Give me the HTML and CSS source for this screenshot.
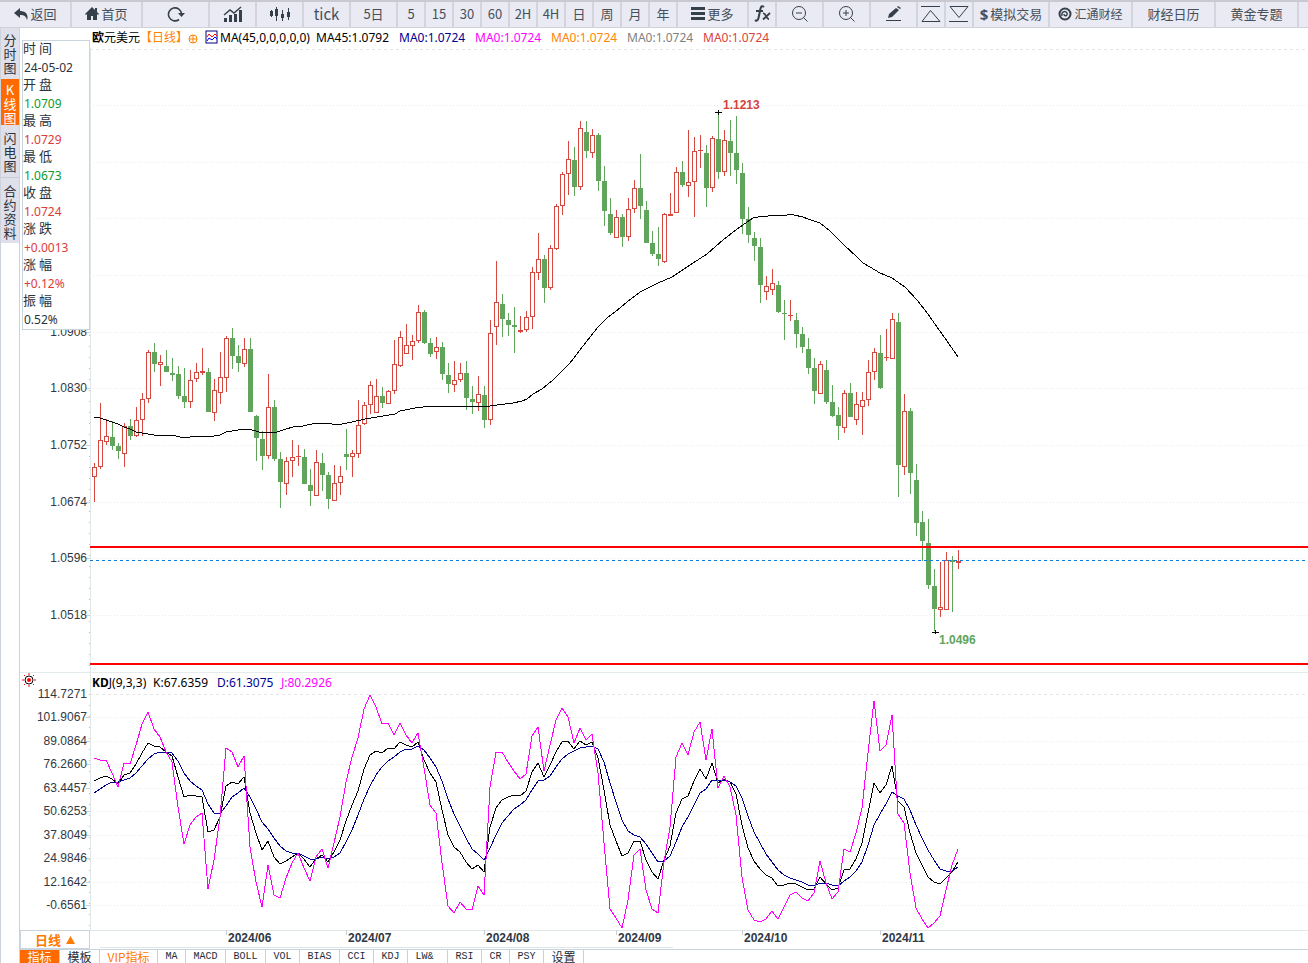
FILE: index.html
```html
<!DOCTYPE html>
<html lang="zh-CN">
<head>
<meta charset="utf-8">
<title>欧元美元 日线</title>
<link rel="stylesheet" href="styles.css">
</head>
<body>
<header class="toolbar">
  <button class="tool wide"><svg class="icon" width="14" height="12" viewBox="0 0 14 12"><path d="M6 0 0 5l6 5V7c4 0 6 1 7 5 2-6-2-9-7-9z"/></svg>返回</button>
  <button class="tool wide"><svg class="icon" width="14" height="13" viewBox="0 0 14 13"><path d="M7 0 0 7l1 1 1-1v6h4V9h2v4h4V7l1 1 1-1-2-2V1h-2v2z"/></svg>首页</button>
  <button class="tool reload" aria-label="刷新"><svg class="icon line" width="18" height="16" viewBox="0 0 18 16"><path d="M12 13.5A6.5 6.5 0 1 1 14.5 8" stroke-width="1.6"/><path class="solid" d="M11 7h7l-3.5 4z"/></svg></button>
  <button class="tool mid" aria-label="指标图"><svg class="icon line" width="20" height="16" viewBox="0 0 20 16"><path class="solid" d="M1 12h3v4H1zM6 9h3v7H6zM11 8h3v8h-3zM16 4h3v12h-3z"/><path d="M1 9l6-5 4 3 7-6" stroke-width="1.4"/></svg></button>
  <button class="tool mid" aria-label="K线图"><svg class="icon line" width="22" height="16" viewBox="0 0 22 16"><path d="M2.500 4v7M7.500 1v14M13.500 4v11M19.500 2v12"/><path class="solid" d="M1 5h3v5H1zM6 3h3v7H6zM12 8h3v4h-3zM18 6h3v5h-3z"/></svg></button>
  <button class="tool mid tick">tick</button>
  <button class="tool mid">5日</button>
  <button class="tool">5</button>
  <button class="tool">15</button>
  <button class="tool">30</button>
  <button class="tool">60</button>
  <button class="tool">2H</button>
  <button class="tool">4H</button>
  <button class="tool">日</button>
  <button class="tool">周</button>
  <button class="tool">月</button>
  <button class="tool">年</button>
  <button class="tool wide"><svg class="icon" width="14" height="13" viewBox="0 0 14 13"><path d="M0 0h14v3H0zM0 5h14v3H0zM0 10h14v3H0z"/></svg>更多</button>
  <button class="tool" aria-label="函数"><svg class="icon line" width="17" height="17" viewBox="0 0 17 17"><path d="M10 2C7 0 6.500 3 6 6L4.500 13C4 16 2 16 1 15M2 6h7" stroke-width="2"/><path d="M9 8.500c3-1 3 6 6 5.500M16 8l-7 6.500" stroke-width="1.800"/></svg></button>
  <button class="tool mid" aria-label="缩小"><svg class="icon line" width="16" height="16" viewBox="0 0 16 16"><circle cx="7" cy="7" r="6.500"/><path d="M4 7h6M11.500 11.500l4 4"/></svg></button>
  <button class="tool mid" aria-label="放大"><svg class="icon line" width="16" height="16" viewBox="0 0 16 16"><circle cx="7" cy="7" r="6.500"/><path d="M4 7h6M7 4v6M11.500 11.500l4 4"/></svg></button>
  <button class="tool mid" aria-label="画线"><svg class="icon" width="16" height="15" viewBox="0 0 16 15"><path d="M2 12l1-4 7-6 3 2-7 7zM11 1l1-1 3 2-1 1zM0 14h15v1H0z"/></svg></button>
  <button class="tool" aria-label="上移"><svg class="icon line" width="20" height="18" viewBox="0 0 20 18"><path d="M0 1.500h19M1 16.500 9.500 5.500 19 16.500z"/></svg></button>
  <button class="tool" aria-label="下移"><svg class="icon line" width="20" height="18" viewBox="0 0 20 18"><path d="M1 1.500h18L10 12.500zM0 16.500h19"/></svg></button>
  <button class="tool trade"><b class="dollar">$</b>模拟交易</button>
  <button class="tool link small"><svg class="icon line" width="14" height="14" viewBox="0 0 14 14"><circle cx="7" cy="7" r="5.500" stroke-width="2"/><path d="M4 9C3 5 7 3 9 6c1 3-3 4-3 1" stroke-width="1.400"/></svg>汇通财经</button>
  <button class="tool link">财经日历</button>
  <button class="tool link">黄金专题</button>
  <span class="filler"></span>
</header>

<div class="workspace">
  <nav class="side">
    <button class="side-tab">分时图</button>
    <button class="side-tab active">K线图</button>
    <button class="side-tab">闪电图</button>
    <button class="side-tab ruled">合约资料</button>
  </nav>

  <main class="main">
    <section class="pane">
      <div class="legend">
        <span><b>欧</b>元美元</span><span class="orange">【日线】</span>
        <svg class="mark" width="10" height="10" viewBox="0 0 10 10"><circle cx="5" cy="5" r="4"/><path d="M1 5h8M5 1v8"/></svg>
        <svg class="thumb" width="13" height="14" viewBox="0 0 13 14"><rect x="1" y="1" width="11" height="12"/><path class="red" d="M2 7l2-3 3 3 3-3 2 2"/><path class="blue" d="M2 11l2-3 3 2 3-3 2 2"/></svg>
        <span class="formula">MA(45,0,0,0,0,0)</span>
        <span class="first">MA45:1.0792</span>
        <span class="value navy">MA0:1.0724</span>
        <span class="value magenta">MA0:1.0724</span>
        <span class="value orange">MA0:1.0724</span>
        <span class="value gray">MA0:1.0724</span>
        <span class="value red">MA0:1.0724</span>
      </div>
      <svg class="plot price" id="price" role="img" aria-label="欧元美元日线"></svg>
      <dl class="quote">
        <dt>时 间</dt><dd>24-05-02</dd>
        <dt>开 盘</dt><dd class="down">1.0709</dd>
        <dt>最 高</dt><dd class="up">1.0729</dd>
        <dt>最 低</dt><dd class="down">1.0673</dd>
        <dt>收 盘</dt><dd class="up">1.0724</dd>
        <dt>涨 跌</dt><dd class="up">+0.0013</dd>
        <dt>涨 幅</dt><dd class="up">+0.12%</dd>
        <dt>振 幅</dt><dd>0.52%</dd>
      </dl>
    </section>

    <section class="pane ruled">
      <div class="legend kdj">
        <svg class="sun" width="14" height="14" viewBox="0 0 14 14"><path d="M7 0v2M7 12v2M0 7h2M12 7h2M2 2l1 1M11 11l1 1M2 12l1-1M11 3l1-1"/><circle class="ring" cx="7" cy="7" r="4"/><circle class="core" cx="7" cy="7" r="2"/></svg>
        <span class="kdj-name"><b>KD</b>J(9,3,3)</span>
        <span class="kdj-value">K:67.6359</span>
        <span class="kdj-value navy">D:61.3075</span>
        <span class="kdj-value magenta">J:80.2926</span>
      </div>
      <svg class="plot osc" id="osc" role="img" aria-label="KDJ"></svg>
    </section>

    <div class="time-row">
      <button class="period">日线 <svg width="9" height="8" viewBox="0 0 9 8"><path d="M4.500 0 9 8H0z"/></svg></button>
      <svg class="plot dates" id="dates"></svg>
    </div>

    <nav class="tabs">
      <button class="tab han active">指标</button>
      <button class="tab han">模板</button>
      <button class="tab han vip">VIP指标</button>
      <button class="tab short">MA</button>
      <button class="tab">MACD</button>
      <button class="tab">BOLL</button>
      <button class="tab three">VOL</button>
      <button class="tab">BIAS</button>
      <button class="tab three">CCI</button>
      <button class="tab three">KDJ</button>
      <button class="tab left">LW&amp;</button>
      <button class="tab three">RSI</button>
      <button class="tab short">CR</button>
      <button class="tab three">PSY</button>
      <button class="tab han">设置</button>
    </nav>
  </main>
</div>
<script src="chart.js"></script>
</body>
</html>
```
FILE: styles.css
```css
* { box-sizing: border-box; }

body {
  margin: 0;
  height: 100vh;
  display: flex;
  flex-direction: column;
  overflow: hidden;
  background: #fff;
  color: #000;
  font: 12px "Noto Sans", "Noto Sans CJK SC", sans-serif;
}

button {
  margin: 0;
  padding: 0;
  border: 0;
  background: none;
  color: inherit;
  font: inherit;
}

/* toolbar */
.toolbar {
  display: flex;
  flex: none;
  height: 28px;
  padding-left: 1px;
  border-top: 2px solid #c9c9d1;
  border-bottom: 1px solid #cfd0d8;
  background: #e9eaf3;
  color: #46505b;
}
.tool {
  flex: none;
  display: flex;
  align-items: center;
  justify-content: center;
  gap: 2px;
  width: 28px;
  padding-bottom: 2px;
  border-right: 2px solid #d3d4dc;
  font: 13px "Noto Sans CJK SC", sans-serif;
  white-space: nowrap;
}
.tool.mid { width: 47px; }
.tool.wide { width: 71px; }
.tool.reload { width: 67px; }
.tool.trade { width: 76px; }
.tool.link { width: 83px; }
.tool.small { font-size: 12px; }
.tool.tick { font-size: 15px; }
.dollar { font-family: "Noto Sans", sans-serif; font-size: 15px; }
.filler { flex: 1; }
.icon { flex: none; fill: #36404b; }
.icon.line { fill: none; stroke: #36404b; }
.icon .solid { fill: #36404b; stroke: none; }

/* workspace */
.workspace { flex: 1; display: flex; min-height: 0; overflow: hidden; }
.side {
  flex: none;
  width: 20px;
  border-left: 1px solid #cdd3dd;
  border-right: 1px solid #cdd3dd;
}
.side-tab {
  display: block;
  width: 100%;
  padding: 6px 2px 4px;
  background: #dfe0ea;
  color: #2a3440;
  font: 13px/14px "Noto Sans CJK SC", sans-serif;
  word-break: break-all;
}
.side-tab:first-child { padding-top: 5px; }
.side-tab.active { padding: 4px 2px 0; background: #ff6a00; color: #fff; }
.side-tab.ruled { padding-bottom: 3px; border-top: 1px solid #c6ccd8; }

.main { flex: 1; display: flex; flex-direction: column; min-width: 0; }
.pane { position: relative; flex: none; }
.pane.ruled { border-top: 1px solid #e4ebec; }

.legend {
  display: flex;
  align-items: center;
  height: 20px;
  padding-left: 72px;
  line-height: 20px;
  white-space: nowrap;
}
.formula { width: 96px; margin-left: 2px; }
.first { width: 83px; }
.value { width: 76px; }
.kdj { padding-left: 2px; }
.kdj-name { width: 61px; }
.kdj-value { width: 64px; }
.navy { color: #000090; }
.magenta { color: #f0f; }
.orange { color: #ff8400; }
.gray { color: #808080; }
.red { color: #d8433b; }

.mark { margin: 2px 7px 0 0; fill: none; stroke: #ff8400; }
.thumb { margin-bottom: 3px; fill: #fff; stroke: #000080; }
.thumb path { fill: none; }
.thumb .red { stroke: #f00; }
.thumb .blue { stroke: #00f; }
.sun { align-self: flex-start; margin-right: 56px; fill: none; stroke: #f00; }
.sun .ring { stroke: #000; }
.sun .core { fill: #f00; stroke: none; }

.quote {
  position: absolute;
  top: 12px;
  left: 2px;
  width: 68px;
  margin: 0;
  border: 1px solid #c9d5de;
  background: #fff;
  color: #2a3340;
}
.quote dt { font: 13px/14px "Noto Sans CJK SC", sans-serif; }
.quote dd { margin: 0; padding: 4px 0 0 1px; line-height: 18px; }
.quote .up { color: #dc3b38; }
.quote .down { color: #0f9a2c; }

/* charts */
.plot { display: block; width: 100%; overflow: visible; }
.price { height: 624px; }
.osc { height: 237px; }
.plot * { shape-rendering: crispEdges; }
.plot text { font: 12px "Liberation Sans", sans-serif; fill: #2f3844; }
.plot .axis-label { text-anchor: end; }
.plot .strong { font-weight: bold; }
.plot .high { fill: #d8433b; }
.plot .low { fill: #61a55c; }
.grid { stroke: #e9ecec; stroke-dasharray: 1 2; }
.grid.top { stroke: #e6e6e6; stroke-dasharray: 3 3; }
.axis { stroke: #e0e7e9; }
.dots { stroke: #b8c2c8; stroke-dasharray: 1 10; }
.notch { stroke: #c5d0d8; }
.level { stroke: #f00; stroke-width: 2; }
.last { stroke: #0a7ad8; stroke-dasharray: 3 3; }
.bull { fill: #d6473f; }
.hollow { fill: #fff; }
.bear { fill: #61a55c; }
.curve { fill: none; stroke: #000; }
.curve.d { stroke: #000090; }
.curve.j { stroke: #f0f; }
.cross { stroke: #000; }

.time-row { display: flex; flex: none; height: 19px; }
.period {
  flex: none;
  display: flex;
  align-items: center;
  justify-content: center;
  gap: 5px;
  width: 70px;
  border: 1px solid #c9d5de;
  color: #ff7a00;
  font: bold 13px/17px "Noto Sans CJK SC", sans-serif;
}
.period svg { fill: #ff7a00; }
.dates { flex: 1; height: 19px; min-width: 0; }

.tabs {
  display: flex;
  flex: 1;
  border-top: 1px solid #c9d5de;
}
.tab {
  flex: none;
  width: 40px;
  border-right: 1px solid #c9d0d8;
  color: #222c38;
  font: 10px/13px "Liberation Mono", monospace;
}
.tab.han { font: 12px/13px "Noto Sans CJK SC", sans-serif; }
.tab.active { background: #ff6a00; color: #fff; }
.tab.vip { width: 58px; color: #ff7a00; }
.tab.short { width: 28px; }
.tab.three { width: 34px; }
.tab.left { padding-right: 6px; }
```
FILE: chart.js
```js
const FIRST_X = 94, STEP = 6, AXIS_X = 90;

// high, body top, body bottom, low, direction (1 rising, 0 falling)
const candles = [
[463,467,477,502,1],[403,440,467,469,1],[419,436,442,445,1],[421,437,446,450,0],[443,446,451,459,0],[423,426,454,467,1],[419,426,436,440,0],[407,420,436,437,1],[393,399,420,436,1],[350,352,399,403,1],
[343,352,364,372,0],[355,362,365,386,1],[350,366,372,372,0],[358,373,375,381,0],[366,374,396,399,0],[368,396,402,408,0],[370,380,402,408,1],[363,372,379,382,1],[348,371,373,375,1],[368,372,412,412,0],
[379,390,413,421,1],[352,377,393,404,1],[336,338,378,392,1],[328,338,356,369,0],[345,356,363,372,0],[338,349,364,367,1],[338,349,412,412,0],[415,416,438,461,0],[431,439,456,470,0],[374,407,456,459,1],
[400,407,459,461,0],[452,459,482,508,0],[457,461,484,495,1],[440,457,461,477,1],[445,456,457,466,1],[449,457,484,484,0],[469,485,491,506,0],[450,462,496,496,1],[453,463,475,491,0],[472,475,499,509,0],
[465,483,501,501,1],[466,476,483,495,1],[429,454,457,470,0],[450,453,457,477,1],[400,425,454,458,1],[402,405,424,425,1],[381,385,405,414,1],[379,396,413,413,1],[387,396,403,408,0],[390,391,404,404,1],
[340,364,391,394,1],[331,337,366,367,1],[324,345,354,354,1],[335,341,346,360,1],[305,312,341,343,1],[310,312,343,344,0],[338,343,354,357,0],[337,347,352,359,1],[342,347,374,380,0],[363,375,384,393,0],
[361,380,385,392,1],[363,373,380,382,1],[361,373,398,410,0],[386,399,402,414,0],[376,394,403,411,1],[386,395,420,428,0],[320,333,420,425,1],[261,302,327,345,1],[294,304,319,337,0],[313,320,325,336,0],
[307,325,327,353,0],[316,330,332,333,1],[311,317,330,332,1],[267,272,317,329,1],[233,259,273,280,1],[255,259,288,303,0],[245,248,288,290,1],[204,206,249,250,1],[172,174,206,215,1],[141,159,174,195,1],
[147,160,187,196,0],[121,128,187,190,1],[121,132,151,158,0],[129,135,153,158,1],[133,135,181,191,0],[166,181,211,226,0],[198,214,233,235,0],[210,217,238,238,1],[214,217,237,247,0],[198,209,237,241,1],
[180,188,209,213,1],[154,188,206,219,0],[201,210,243,243,0],[231,243,254,256,0],[227,254,259,266,0],[213,214,262,263,1],[193,214,216,216,1],[167,172,213,213,1],[161,172,185,187,0],[130,182,186,197,1],
[137,151,182,217,1],[135,150,151,168,1],[145,153,188,207,0],[136,138,188,192,1],[112,139,172,179,0],[130,140,172,176,1],[120,141,153,176,0],[116,153,170,184,0],[163,173,219,234,0],[207,219,235,243,0],
[232,238,246,261,0],[238,247,285,303,0],[276,286,292,300,1],[269,283,290,295,1],[281,285,312,313,0],[300,313,314,340,0],[300,315,316,321,1],[313,320,334,348,0],[327,334,347,353,0],[338,349,368,374,0],
[358,368,391,404,0],[361,364,394,394,1],[360,370,402,404,0],[385,402,416,417,0],[407,415,426,440,0],[390,393,428,433,1],[383,393,417,417,0],[392,404,420,425,1],[392,400,407,435,1],[360,372,400,406,1],
[348,352,372,380,1],[335,353,388,389,0],[329,357,358,361,1],[313,319,359,359,1],[313,322,465,497,0],[394,411,467,475,1],[408,411,473,494,0],[464,480,523,536,0],[511,522,541,561,0],[519,543,585,589,0],
[569,586,609,631,0],[562,607,610,617,1],[552,560,610,610,1],[556,560,562,612,0],[550,561,563,569,1]
];

const average = "94,417 100,418 106,420 112,422 118,424 124,427 130,429 136,432 142,433 148,434 154,435 172,435 184,438 190,437 202,436 208,437 214,436 220,435 226,432 232,431 238,430 248,429 256,431 262,433 268,432 277,432 286,429 293,427 303,426 316,423 332,424 342,424 352,422 365,419 377,417 395,414 400,411 415,408 423,407 435,406 468,406 473,407 490,406 497,405 513,403 522,401 527,399 533,394 542,389 553,380 570,363 583,346 598,327 607,318 615,312 627,302 640,292 658,283 672,277 687,267 693,263 707,254 723,240 737,229 753,218 758,217 768,216 777,215 787,215 790,214 794,215 803,217 808,219 820,223 830,231 843,244 857,257 863,263 870,267 880,273 892,278 905,287 917,300 928,314 937,327 947,341 958,357";

const K = [781,778,776,779,784,775,773,764,753,743,746,747,752,756,777,797,795,796,797,832,830,817,786,782,784,777,813,833,850,841,857,864,861,857,853,859,867,859,855,862,852,840,821,805,791,
769,755,751,753,748,749,742,745,747,742,760,773,782,810,835,847,852,862,869,865,872,827,808,800,797,795,796,791,772,763,777,765,752,742,741,749,741,745,742,758,790,825,841,856,853,841,841,860,872,879,860,
846,813,799,796,781,769,779,763,783,779,782,794,825,848,861,869,875,878,886,885,883,884,887,890,889,877,884,890,888,870,869,859,843,813,783,793,785,766,801,807,833,853,865,877,882,884,878,872,862];
const D = [793,789,785,782,782,780,778,773,766,759,754,752,752,753,761,773,781,786,790,804,813,814,806,797,793,788,797,809,822,829,838,846,851,853,853,856,859,859,857,859,857,853,842,830,815,
799,786,775,767,761,757,752,749,749,746,750,758,767,781,799,814,826,838,849,854,860,848,835,823,816,809,805,800,790,781,780,776,767,759,754,751,748,747,746,749,762,783,802,820,831,835,837,844,853,862,861,
856,842,827,817,805,793,789,780,781,780,782,786,798,816,832,843,854,862,870,875,878,880,882,885,886,883,883,885,886,881,877,871,862,845,825,814,804,792,796,799,810,825,838,850,860,869,871,871,867];
const J = [758,760,760,773,787,763,764,745,724,712,729,737,752,762,807,844,825,817,813,889,860,817,748,752,767,756,847,882,907,865,895,898,878,863,853,868,881,857,849,868,843,817,782,757,738,
709,695,707,724,723,735,723,735,743,733,768,805,813,863,906,913,902,909,910,886,895,787,752,752,762,771,779,774,736,727,771,745,720,708,717,743,728,740,734,773,843,909,918,928,900,855,849,890,909,913,862,
827,757,743,755,732,722,760,729,788,776,787,815,877,910,920,922,919,911,919,907,895,892,898,901,893,861,883,899,892,849,852,833,808,753,701,751,745,715,814,823,873,908,919,928,923,916,890,865,849];

const line = (x1, y1, x2, y2, cls) => `<line x1="${x1}" y1="${y1}" x2="${x2}" y2="${y2}" class="${cls}"/>`;
const text = (x, y, s, cls) => `<text x="${x}" y="${y}" class="${cls}">${s}</text>`;
const box = (x, y, w, h, cls) => `<rect x="${x}" y="${y}" width="${w}" height="${h}" class="${cls}"/>`;
const curve = (points, cls) => `<polyline points="${points}" class="curve ${cls}"/>`;
const series = values => values.map((y, i) => `${FIRST_X + STEP * i},${y}`).join(" ");

function draw(id, left, top, content) {
  document.getElementById(id).innerHTML = `<g transform="translate(${-left} ${-top})">${content}</g>`;
}

function scale(top, bottom, levels, labels) {
  let out = line(AXIS_X, top, AXIS_X, bottom, "axis") + line(89, levels[0], 89, bottom, "dots");
  levels.forEach((y, i) => {
    out += line(AXIS_X, y, "110%", y, i ? "grid" : "grid top");
    if (i) out += line(86, y, AXIS_X, y, "notch");
    if (labels[i]) out += text(87, y + 4, labels[i], "axis-label");
  });
  return out;
}

let price = scale(48, 672,
  [49, 105, 162, 218, 275, 332, 388, 445, 502, 558, 615],
  ["", "", "", "", "", "1.0908", "1.0830", "1.0752", "1.0674", "1.0596", "1.0518"]);
candles.forEach(([high, top, bottom, low, rising], i) => {
  const x = FIRST_X + STEP * i, cls = rising ? "bull" : "bear";
  price += box(x, high, 1, low - high, cls) + box(x - 2, top, 5, Math.max(1, bottom - top), cls);
  if (rising && bottom - top > 2) price += box(x - 1, top + 1, 3, bottom - top - 2, "hollow");
});
price += curve(average, "")
  + line(AXIS_X, 547, "110%", 547, "level")
  + line(AXIS_X, 664, "110%", 664, "level")
  + line(AXIS_X, 560, "110%", 560, "last")
  + line(715, 112, 722, 112, "cross") + line(718, 110, 718, 115, "cross")
  + line(932, 632, 939, 632, "cross") + line(935, 630, 935, 634, "cross")
  + text(723, 109, "1.1213", "strong high")
  + text(939, 644, "1.0496", "strong low");
draw("price", 20, 48, price);

draw("osc", 20, 693,
  scale(673, 930,
    [694, 717, 741, 764, 788, 811, 835, 858, 882, 905],
    ["114.7271", "101.9067", "89.0864", "76.2660", "63.4457", "50.6253", "37.8049", "24.9846", "12.1642", "-0.6561"])
  + curve(series(K), "") + curve(series(D), "d") + curve(series(J), "j"));

const months = [[226, "2024/06"], [346, "2024/07"], [484, "2024/08"], [616, "2024/09"], [742, "2024/10"], [880, "2024/11"]];
draw("dates", 90, 930,
  line(90, 930, "110%", 930, "axis") + line(100, 947, 673, 947, "axis")
  + months.map(([x, s]) => line(x, 930, x, 935, "notch") + text(x + 2, 942, s, "strong")).join(""));
```
